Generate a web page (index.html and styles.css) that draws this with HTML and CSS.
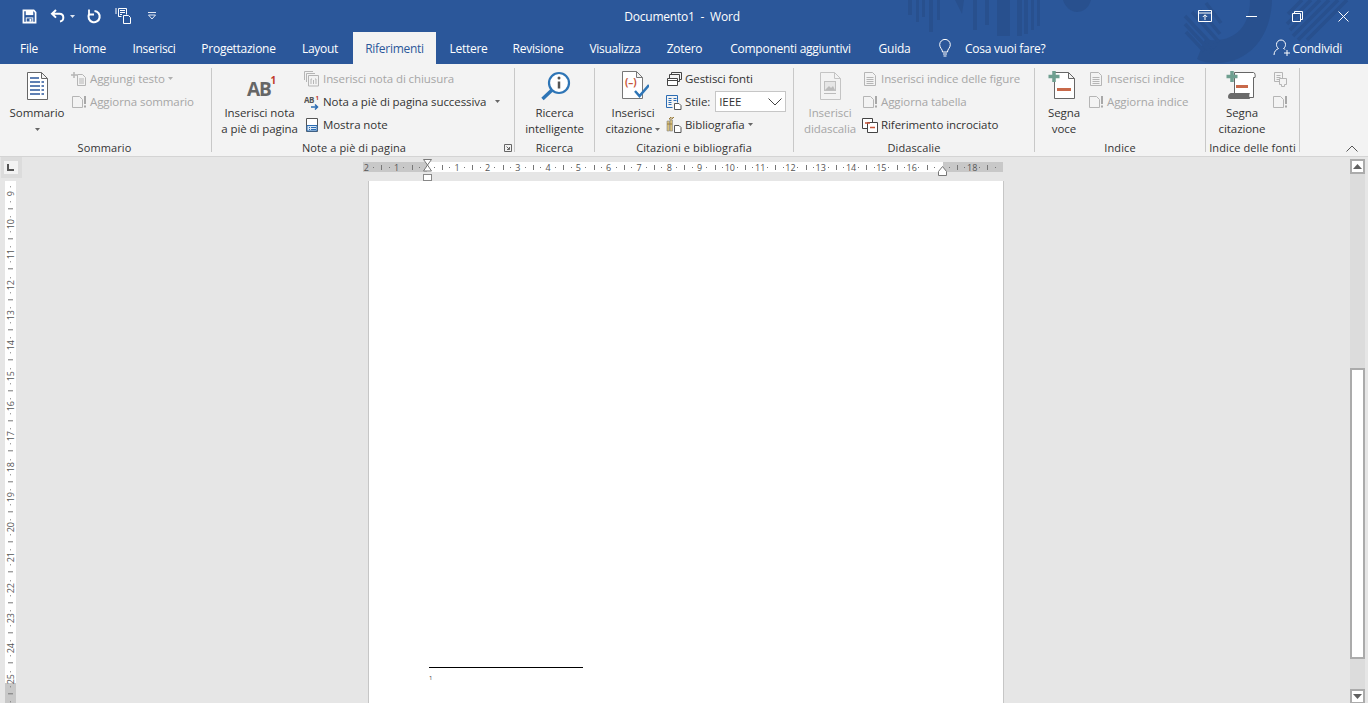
FILE: index.html
```html
<!DOCTYPE html>
<html lang="it">
<head>
<meta charset="utf-8">
<title>Documento1 - Word</title>
<link rel="stylesheet" href="styles.css">
</head>
<body>
<div class="app">
  <header class="header">
    <svg class="watermark" width="1368" height="64" viewBox="0 0 1368 64">
      <g fill="#28508e">
        <rect x="908" y="0" width="4" height="15"/><rect x="916" y="0" width="3" height="22"/><rect x="922" y="0" width="3" height="17"/>
        <rect x="929" y="0" width="4" height="32"/><rect x="937" y="0" width="3" height="20"/>
        <path d="M955 0h9l-2 14z"/><rect x="973" y="0" width="4" height="30"/><rect x="985" y="0" width="4" height="25"/>
        <rect x="997" y="0" width="13" height="36"/><rect x="1017" y="0" width="5" height="36"/><rect x="1024" y="0" width="4" height="34"/><rect x="1031" y="0" width="3" height="30"/><rect x="1037" y="0" width="3" height="26"/>
        <path d="M1063 0h28c-2 8-8 12-14 12s-12-5-14-12z"/>
        <path d="M1250 0h22c-1 38-24 63-55 63-8 0-15-1-20-4l8-20c14 4 45 0 45-39z"/>
      </g>
      <g stroke="#28508e" stroke-width="3.5" fill="none">
        <path d="M1185 16l30 32M1185 24l26 28M1186 32l18 19M1192 12l27 30M1200 10l20 24M1206 3l15 20"/>
        <path d="M1347 0l-40 40M1338 0l-40 40M1329 0l-36 36M1320 0l-30 30M1311 0l-24 24M1302 0l-14 14"/>
      </g>
    </svg>
    <div class="title-bar">
      <div class="qat">
        <span class="qat-btn qat-save"><svg width="15" height="15" viewBox="0 0 16 16"><path d="M1.500 1.500h11l2 2v11h-13z" fill="none" stroke="#fff" stroke-width="1.800"/><rect x="4" y="2" width="8" height="4.500" fill="#fff"/><rect x="4.500" y="9.500" width="7" height="4.500" fill="none" stroke="#fff"/><rect x="8" y="10.500" width="2" height="3" fill="#fff"/></svg></span>
        <span class="qat-btn qat-undo"><svg width="16" height="16" viewBox="0 0 16 16"><path d="M6 2L2 5.800l4 3.800M2.500 5.800h7c5 0 5 7 .5 7.800" fill="none" stroke="#fff" stroke-width="2"/></svg><svg class="mini" width="5" height="3" viewBox="0 0 5 3"><path d="M0 0h5L2.500 3z" fill="#dfe6f2"/></svg></span>
        <span class="qat-btn qat-redo"><svg width="16" height="16" viewBox="0 0 16 16"><path d="M8.500 3a5.600 5.600 0 1 1-5.500 3.200" fill="none" stroke="#fff" stroke-width="2.100"/><path d="M3 1.500v5h5" fill="none" stroke="#fff" stroke-width="1.800"/></svg></span>
        <span class="qat-btn qat-touch"><svg width="18" height="18" viewBox="0 0 18 18"><g fill="none" stroke="#fff"><path d="M4.500 1.500h8v6M4.500 1.500v8h3"/><path d="M9.500 8.500h5l2 2v6h-7z"/></g><path d="M6 3.500h5M6 5.500h5M6 7.500h2M1 2h2M1 4h2M1 6h2" stroke="#fff"/></svg></span>
        <span class="qat-btn qat-custom"><svg width="10" height="8" viewBox="0 0 10 8"><path d="M1 .5h8M1.500 3h7L5 7z" stroke="#e3e9f4" fill="none"/></svg></span>
      </div>
      <div class="doc-title">Documento1&nbsp; -&nbsp; Word</div>
      <div class="win-controls">
        <span class="win-btn"><svg width="14" height="12" viewBox="0 0 14 12"><path d="M.5.500h13v11H.500zM.5 3h13M7 10V5M4.800 7L7 4.800 9.200 7" fill="none" stroke="#fff"/></svg></span>
        <span class="win-btn"><svg width="11" height="11" viewBox="0 0 11 11"><path d="M0 5.500h11" stroke="#fff"/></svg></span>
        <span class="win-btn"><svg width="11" height="11" viewBox="0 0 11 11"><path d="M.5 2.500h8v8h-8zM2.500 2.500v-2h8v8h-2" fill="none" stroke="#fff"/></svg></span>
        <span class="win-btn"><svg width="11" height="11" viewBox="0 0 11 11"><path d="M.5.500l10 10M10.500.500l-10 10" fill="none" stroke="#fff"/></svg></span>
      </div>
    </div>
    <nav class="tabs">
      <span class="tab">File</span>
      <span class="tab">Home</span>
      <span class="tab">Inserisci</span>
      <span class="tab">Progettazione</span>
      <span class="tab">Layout</span>
      <span class="tab active">Riferimenti</span>
      <span class="tab">Lettere</span>
      <span class="tab">Revisione</span>
      <span class="tab">Visualizza</span>
      <span class="tab">Zotero</span>
      <span class="tab">Componenti aggiuntivi</span>
      <span class="tab">Guida</span>
      <span class="tell-me"><svg width="16" height="18" viewBox="0 0 16 18"><path d="M5.500 13c0-3-2.800-4-2.800-7.300a5.300 5.300 0 0 1 10.600 0C13.300 9 10.500 10 10.500 13zM6 15h4M6.500 17h3" fill="none" stroke="#fff"/></svg><span>Cosa vuoi fare?</span></span>
      <span class="share"><svg width="18" height="18" viewBox="0 0 18 18"><path d="M1 16c0-4 2.500-5.500 4.500-6.500C4 8.500 3.500 7 3.500 5.500a4.500 4.500 0 0 1 9 0c0 1.500-.5 3-2 4 .7.300 1.200.6 1.700 1" fill="none" stroke="#fff"/><path d="M14 11v6M11 14h6" stroke="#fff"/></svg><span>Condividi</span></span>
    </nav>
  </header>

  <section class="ribbon">
    <div class="group g-toc">
      <div class="group-body">
        <div class="big big-toc">
          <svg class="big-icon" width="32" height="32" viewBox="0 0 32 32"><path d="M6.500 2.500h14l6 6v21h-20zM20.500 2.500v6h6" fill="#fff" stroke="#666"/><path d="M9 8h9M9 12h14M9 16h14M9 20h14M9 24h14" stroke="#2b579a" stroke-width="1.500" stroke-dasharray="10 1.500"/></svg>
          <span class="big-text">Sommario</span>
          <svg class="caret big-caret" width="5" height="3" viewBox="0 0 5 3"><path d="M0 0h5L2.500 3z"/></svg>
        </div>
        <div class="col">
          <div class="row off"><svg width="16" height="16" viewBox="0 0 16 16"><path d="M6.500 3.500h5l3 3v8h-8zM8 8h5M8 10h5M8 12h5" fill="none" stroke="#b5b5b5"/><path d="M3 1v6M0 4h6" stroke="#b5b5b5" stroke-width="1.500"/></svg><span>Aggiungi testo</span><svg class="caret" width="5" height="3" viewBox="0 0 5 3"><path d="M0 0h5L2.500 3z"/></svg></div>
          <div class="row off"><svg width="16" height="16" viewBox="0 0 16 16"><path d="M1.500 2.500h7l3 3v8h-10z" fill="none" stroke="#b5b5b5"/><path d="M14 2v8M14 11.500v2" stroke="#a8a8a8" stroke-width="2"/></svg><span>Aggiorna sommario</span></div>
        </div>
      </div>
      <div class="group-label">Sommario</div>
    </div>

    <div class="group g-notes">
      <div class="group-body">
        <div class="big big-note">
          <svg class="big-icon" width="32" height="32" viewBox="0 0 32 32"><text x="3" y="26" class="ab">AB</text><text x="26.500" y="14" class="ab-one">1</text></svg>
          <span class="big-text">Inserisci nota<br>a piè di pagina</span>
        </div>
        <div class="col col-note">
          <div class="row off"><svg width="16" height="16" viewBox="0 0 16 16"><g fill="none" stroke="#b5b5b5"><path d="M.5 9V.5H9M2.500 11V2.500H11M4.500 13V4.500h10V15H4.500z"/><path d="M7 8v5M7 8h1M12 8v5M12 8h-1"/></g><path d="M9.500 9v4" stroke="#b5b5b5"/></svg><span>Inserisci nota di chiusura</span></div>
          <div class="row"><svg width="16" height="16" viewBox="0 0 16 16"><text x="0" y="9" class="ab-small">AB</text><text x="11.500" y="5.500" class="ab-small-one">1</text><path d="M7 13h6M11 10.500l2.500 2.500-2.500 2.500" fill="none" stroke="#2b6cb3" stroke-width="1.500"/></svg><span>Nota a piè di pagina successiva</span><svg class="caret caret-far" width="5" height="3" viewBox="0 0 5 3"><path d="M0 0h5L2.500 3z"/></svg></div>
          <div class="row"><svg width="16" height="16" viewBox="0 0 16 16"><path d="M2.500 1.500h11v13h-11z" fill="#fff" stroke="#555"/><path d="M3 8.500h10v5.500H3z" fill="#d8e6f4" stroke="#2b6cb3"/><path d="M5 10.500h1M7 10.500h5M5 12.500h1M7 12.500h5" stroke="#2b6cb3"/></svg><span>Mostra note</span></div>
        </div>
      </div>
      <div class="group-label">Note a piè di pagina</div>
      <svg class="launcher" width="8" height="8" viewBox="0 0 8 8"><path d="M.5 7.500V.5h7v7zM2.500 2.500l3 3M3 5.500h2.500V3" fill="none" stroke="#666"/></svg>
    </div>

    <div class="group g-search">
      <div class="group-body">
        <div class="big big-search">
          <svg class="big-icon" width="32" height="32" viewBox="0 0 32 32"><circle cx="20" cy="13" r="10" fill="#fff" stroke="#2e75b6" stroke-width="2.200"/><path d="M13 20L3.500 29" stroke="#2e75b6" stroke-width="3.500"/><path d="M20 11.500v7" stroke="#555" stroke-width="2.500"/><circle cx="20" cy="8" r="1.500" fill="#555"/></svg>
          <span class="big-text">Ricerca<br>intelligente</span>
        </div>
      </div>
      <div class="group-label">Ricerca</div>
    </div>

    <div class="group g-cite">
      <div class="group-body">
        <div class="big big-cite">
          <svg class="big-icon" width="32" height="32" viewBox="0 0 32 32"><path d="M5.500 1.500h14l6 6v21h-20zM19.500 1.500v6h6" fill="#fff" stroke="#777"/><text x="8" y="16" class="paren">(–)</text><path d="M18 21l4.500 5L32 15" fill="none" stroke="#2e75b6" stroke-width="2.500"/></svg>
          <span class="big-text">Inserisci<br>citazione<svg class="caret inline-caret" width="5" height="3" viewBox="0 0 5 3"><path d="M0 0h5L2.500 3z"/></svg></span>
        </div>
        <div class="col col-cite">
          <div class="row"><svg width="16" height="16" viewBox="0 0 16 16"><path d="M5.500 5V1.500h10v7h-2" fill="none" stroke="#444"/><path d="M3.500 7V3.500h10v7h-2" fill="#f3f3f3" stroke="#444"/><path d="M1.500 7.500h10v7h-10z" fill="#fff" stroke="#444"/><path d="M1.500 9.500h10" stroke="#444"/></svg><span>Gestisci fonti</span></div>
          <div class="row"><svg width="16" height="16" viewBox="0 0 16 16"><path d="M.5 1.500h11v7M.5 1.500v12h6" fill="none" stroke="#2b6cb3"/><path d="M2.500 4.500h3M2.500 6.500h3M2.500 8.500h3M2.500 10.500h3M7.500 4.500h3M7.500 6.500h3" stroke="#2b6cb3"/><path d="M8.500 9.500h4.500l2 2v4h-6.500z" fill="#fff" stroke="#555"/></svg><span>Stile:</span>
            <span class="combo"><span>IEEE</span><svg width="14" height="8" viewBox="0 0 14 8"><path d="M.5.500L7 7l6.500-6.500" fill="none" stroke="#444"/></svg></span></div>
          <div class="row"><svg width="16" height="16" viewBox="0 0 16 16"><path d="M1 4h2.500v10H1zM4 3h2.500v11H4z" fill="#d9c17a" stroke="#888" stroke-width=".6"/><path d="M3 2l2-2h3L6 2zM1 7h5" stroke="#9a7d3c" fill="none"/><path d="M8.500 8.500h4.500l2 2v5H8.500z" fill="#fff" stroke="#555"/></svg><span>Bibliografia</span><svg class="caret" width="5" height="3" viewBox="0 0 5 3"><path d="M0 0h5L2.500 3z"/></svg></div>
        </div>
      </div>
      <div class="group-label">Citazioni e bibliografia</div>
    </div>

    <div class="group g-cap">
      <div class="group-body">
        <div class="big big-cap off">
          <svg class="big-icon" width="32" height="32" viewBox="0 0 32 32"><path d="M6.500 2.500h14l6 6v21h-20zM20.500 2.500v6h6" fill="none" stroke="#c4c4c4"/><rect x="10.500" y="11.500" width="11" height="9" fill="#e6e6e6" stroke="#c0c0c0"/><path d="M11 20l4-4 2 2 2-2 2 4z" fill="#bbb"/><path d="M10 23.500h12" stroke="#bbb"/></svg>
          <span class="big-text">Inserisci<br>didascalia</span>
        </div>
        <div class="col col-cap">
          <div class="row off"><svg width="16" height="16" viewBox="0 0 16 16"><path d="M2.500 1.500h8l3 3v10h-11zM4.500 6.500h7M4.500 8.500h7M4.500 10.500h7M4.500 12.500h7" fill="none" stroke="#b5b5b5"/></svg><span>Inserisci indice delle figure</span></div>
          <div class="row off"><svg width="16" height="16" viewBox="0 0 16 16"><path d="M1.500 2.500h7l3 3v8h-10z" fill="none" stroke="#b5b5b5"/><path d="M14 2v8M14 11.500v2" stroke="#a8a8a8" stroke-width="2"/></svg><span>Aggiorna tabella</span></div>
          <div class="row"><svg width="16" height="16" viewBox="0 0 16 16"><path d="M.5 1.500h10v10h-10z" fill="#fff" stroke="#444"/><path d="M5.500 5.500h10v10h-10z" fill="#fff" stroke="#444"/><path d="M3 6h5" stroke="#c8553a" stroke-width="1.500"/><path d="M8 10.500h5" stroke="#c8553a" stroke-width="1.500"/></svg><span>Riferimento incrociato</span></div>
        </div>
      </div>
      <div class="group-label">Didascalie</div>
    </div>

    <div class="group g-index">
      <div class="group-body">
        <div class="big big-index">
          <svg class="big-icon" width="32" height="32" viewBox="0 0 32 32"><path d="M6.500 2.500h14l6 6v20h-20zM20.500 2.500v6h6" fill="#fff" stroke="#666"/><path d="M9 19.500h14" stroke="#c8694a" stroke-width="3"/><path d="M6 1v11M0.500 6.500h11" stroke="#6f9f90" stroke-width="3.500"/></svg>
          <span class="big-text">Segna<br>voce</span>
        </div>
        <div class="col col-index">
          <div class="row off"><svg width="16" height="16" viewBox="0 0 16 16"><path d="M2.500 1.500h8l3 3v10h-11zM4.500 6.500h7M4.500 8.500h7M4.500 10.500h7M4.500 12.500h7" fill="none" stroke="#b5b5b5"/></svg><span>Inserisci indice</span></div>
          <div class="row off"><svg width="16" height="16" viewBox="0 0 16 16"><path d="M1.500 2.500h7l3 3v8h-10z" fill="none" stroke="#b5b5b5"/><path d="M14 2v8M14 11.500v2" stroke="#a8a8a8" stroke-width="2"/></svg><span>Aggiorna indice</span></div>
        </div>
      </div>
      <div class="group-label">Indice</div>
    </div>

    <div class="group g-auth">
      <div class="group-body">
        <div class="big big-auth">
          <svg class="big-icon" width="32" height="32" viewBox="0 0 32 32"><path d="M8.500 2.500h19c1.500 0 2 3 1.500 5h-1.500v20h-19z" fill="#fff" stroke="#666"/><path d="M2 27c0-3 2-4 3-4h19c-1 1-1 4 0 6H4c-1 0-2-1-2-2z" fill="#6a6a6a"/><path d="M10 16.500h12" stroke="#c8694a" stroke-width="3"/><path d="M6 1v11M0.500 6.500h11" stroke="#6f9f90" stroke-width="3.500"/></svg>
          <span class="big-text">Segna<br>citazione</span>
        </div>
        <div class="col col-auth">
          <div class="row off"><svg width="16" height="16" viewBox="0 0 16 16"><path d="M2.500 1.500h8v9h-8zM4.500 4.500h4M4.500 6.500h4M4.500 8.500h4" fill="none" stroke="#b5b5b5"/><path d="M7.500 7.500h7v6h-2v2h-3v-2h-2z" fill="#f3f3f3" stroke="#b5b5b5"/></svg></div>
          <div class="row off"><svg width="16" height="16" viewBox="0 0 16 16"><path d="M1.500 2.500h7l3 3v8h-10z" fill="none" stroke="#b5b5b5"/><path d="M14 2v8M14 11.500v2" stroke="#a8a8a8" stroke-width="2"/></svg></div>
        </div>
      </div>
      <div class="group-label">Indice delle fonti</div>
    </div>

    <svg class="collapse" width="12" height="7" viewBox="0 0 12 7"><path d="M.5 6.500L6 1l5.500 5.500" fill="none" stroke="#555"/></svg>
  </section>

  <main class="workspace">
    <aside class="left-rail">
      <div class="corner"><span class="corner-inner"><svg width="8" height="7" viewBox="0 0 8 7"><path d="M1 0v6h6" fill="none" stroke="#555" stroke-width="2"/></svg></span></div>
      <div class="v-ruler">
        <div class="v-track">
          <span>9</span><span>10</span><span>11</span><span>12</span><span>13</span><span>14</span><span>15</span><span>16</span><span>17</span><span>18</span><span>19</span><span>20</span><span>21</span><span>22</span><span>23</span><span>24</span><span>25</span><span></span>
        </div>
      </div>
    </aside>
    <div class="canvas">
      <div class="h-ruler">
        <div class="h-clip">
          <div class="h-track">
            <span>2</span><span>1</span><span></span><span>1</span><span>2</span><span>3</span><span>4</span><span>5</span><span>6</span><span>7</span><span>8</span><span>9</span><span>10</span><span>11</span><span>12</span><span>13</span><span>14</span><span>15</span><span>16</span><span></span><span>18</span><span></span>
          </div>
        </div>
        <svg class="indent-left" width="10" height="22" viewBox="0 0 10 22"><path d="M.5.500h8L4.500 6zM4.500 6l4 6h-8z" fill="#fff" stroke="#777"/><rect x=".5" y="15.500" width="8" height="6" fill="#fff" stroke="#888"/></svg>
        <svg class="indent-right" width="10" height="10" viewBox="0 0 10 10"><path d="M4.500 .5l4 5v4h-8v-4z" fill="#fff" stroke="#777"/></svg>
      </div>
      <article class="page">
        <div class="footnote-rule"></div>
        <div class="footnote-num">1</div>
      </article>
    </div>
    <div class="scrollbar">
      <div class="sb-btn"><svg width="9" height="5" viewBox="0 0 9 5"><path d="M4.500 0L9 5H0z" fill="#606060"/></svg></div>
      <div class="sb-gap sb-gap-top"></div>
      <div class="sb-thumb"></div>
      <div class="sb-gap sb-gap-bottom"></div>
      <div class="sb-btn"><svg width="9" height="5" viewBox="0 0 9 5"><path d="M0 0h9L4.500 5z" fill="#606060"/></svg></div>
    </div>
  </main>
</div>
</body>
</html>
```
FILE: styles.css
```css
* { box-sizing: border-box; }
html, body { margin: 0; padding: 0; height: 100%; overflow: hidden; }
body { font-family: "Open Sans", "Noto Sans", sans-serif; font-size: 11.5px; letter-spacing: -0.08px; color: #333; background: #e6e6e6; }
svg { display: block; flex: none; }
.app { display: flex; flex-direction: column; height: 703px; width: 1368px; overflow: hidden; }

/* Header */
.header { position: relative; background: #2b579a; color: #fff; height: 64px; flex: none; }
.watermark { position: absolute; left: 0; top: 0; }
.title-bar { position: relative; display: grid; grid-template-columns: 1fr auto 1fr; height: 32px; align-items: center; }
.qat { display: flex; align-items: center; padding-left: 14px; }
.qat-btn { display: flex; align-items: center; justify-content: center; gap: 4px; height: 32px; }
.qat-save { width: 30px; }
.qat-undo { width: 37px; }
.qat-redo { width: 26px; }
.qat-touch { width: 31px; }
.qat-custom { width: 27px; }
.doc-title { font-size: 12px; letter-spacing: -0.2px; padding-right: 4px; white-space: nowrap; }
.win-controls { display: flex; justify-content: flex-end; padding-right: 2px; }
.win-btn { width: 46px; height: 32px; display: flex; align-items: center; justify-content: center; }

.tabs { position: relative; display: flex; height: 32px; align-items: stretch; font-size: 12px; letter-spacing: -0.27px; }
.tab { display: flex; align-items: center; justify-content: center; white-space: nowrap; }
.tab:nth-child(1) { width: 58px; }
.tab:nth-child(2) { width: 63px; }
.tab:nth-child(3) { width: 66px; }
.tab:nth-child(4) { width: 103px; }
.tab:nth-child(5) { width: 63px; padding-right: 3px; }
.tab:nth-child(6) { width: 83px; }
.tab:nth-child(7) { width: 65px; }
.tab:nth-child(8) { width: 74px; }
.tab:nth-child(9) { width: 80px; }
.tab:nth-child(10) { width: 59px; }
.tab:nth-child(11) { width: 153px; }
.tab:nth-child(12) { width: 55px; }
.tab.active { background: #f3f3f3; color: #2b579a; }
.tell-me { display: flex; align-items: center; gap: 12px; margin-left: 15px; white-space: nowrap; }
.share { display: flex; align-items: center; gap: 2px; margin-left: auto; padding-right: 26px; white-space: nowrap; }

/* Ribbon */
.ribbon { display: flex; flex: none; height: 93px; padding-top: 4px; background: #f3f3f3; border-bottom: 1px solid #d4d4d4; }
.group { position: relative; display: flex; flex-direction: column; height: 84px; border-right: 1px solid #c8c8c8; }
.g-toc { width: 212px; padding-left: 3px; }
.g-notes { width: 303px; padding-left: 8px; }
.g-search { width: 80px; }
.g-cite { width: 199px; padding-left: 9px; }
.g-cap { width: 241px; padding-left: 8px; }
.g-index { width: 171px; padding-left: 9px; }
.g-auth { width: 94px; padding-left: 2px; }
.group-body { display: flex; height: 73px; margin-top: -1px; flex: none; }
.group-label { height: 16px; line-height: 16px; text-align: center; font-size: 11px; letter-spacing: 0.1px; white-space: nowrap; flex: none; }
.g-notes .group-label { padding-right: 26px; }
.g-toc .group-label { padding-right: 5px; }
.g-cite .group-label { padding-right: 9px; }
.g-cap .group-label { padding-right: 8px; }
.g-index .group-label { padding-right: 9px; }
.g-auth .group-label { padding-right: 2px; }

.big { display: flex; flex-direction: column; align-items: center; text-align: center; line-height: 16px; white-space: nowrap; flex: none; }
.big-icon { margin-top: 3px; margin-bottom: 3px; }
.big-text { display: block; }
.big-toc { width: 68px; }
.big-note { width: 79px; }
.big-search { width: 79px; }
.big-cite { width: 58px; }
.big-cap { width: 52px; margin-left: 2px; }
.big-index { width: 40px; }
.big-auth { width: 68px; }
.big-caret { margin-top: 7px; }
.inline-caret { display: inline-block; margin-left: 3px; vertical-align: middle; }
.caret path { fill: #666; }
.off .caret path { fill: #b0b0b0; }

.col { display: flex; flex-direction: column; }
.col-note { margin-left: 5px; }
.col-cite { margin-left: 4px; }
.col-cap { margin-left: 6px; }
.col-index { margin-left: 4px; }
.col-auth { margin-left: -4px; }
.row { display: flex; align-items: center; height: 23px; gap: 3px; white-space: nowrap; }
.off { color: #a6a6a6; }
.caret-far { margin-left: 6px; }
.combo { display: flex; align-items: center; justify-content: space-between; width: 71px; height: 21px; margin-left: 2px; padding: 0 3px; background: #fff; border: 1px solid #c6c6c6; }

.ab { font: 700 19px "Open Sans", sans-serif; fill: #666; letter-spacing: -1px; }
.ab-one { font: 700 10px "Open Sans", sans-serif; fill: #c0392b; }
.ab-small { font: 700 8px "Open Sans", sans-serif; fill: #555; letter-spacing: -0.4px; }
.ab-small-one { font: 700 6px "Open Sans", sans-serif; fill: #c0392b; }
.paren { font: 700 10px "Open Sans", sans-serif; fill: #c8553a; }

.launcher { position: absolute; right: 2px; top: 76px; }
.collapse { align-self: flex-end; margin: 0 0 4px 46px; }

/* Workspace */
.workspace { flex: 1; display: flex; min-height: 0; background: #e6e6e6; }
.left-rail { width: 22px; flex: none; }
.corner { width: 21px; height: 21px; margin-left: 1px; background: #dcdcdc; padding: 4px 3px; }
.corner-inner { display: flex; align-items: center; justify-content: center; width: 14px; height: 13px; background: #f3f3f3; }
.v-ruler { width: 11px; height: 522px; margin: 3px 0 0 5px; overflow: hidden; background: linear-gradient(#fff 502px, #c8c8c8 502px); }
.v-track { display: flex; flex-direction: column; margin-top: -2.15px; }
.v-track span { display: flex; align-items: center; justify-content: center; flex: none; width: 11px; height: 30.3px; font-size: 9px; letter-spacing: 0; line-height: 1; color: #555; writing-mode: vertical-rl; transform: rotate(180deg); background:
  linear-gradient(#777, #777) 50% 0 / 5px 1px no-repeat,
  linear-gradient(#777, #777) 50% 25% / 1px 1px no-repeat,
  linear-gradient(#777, #777) 50% 75% / 1px 1px no-repeat; }

.canvas { flex: 1; min-width: 0; }
.h-ruler { position: relative; width: 640px; height: 10px; margin: 5px 0 0 341px; background: linear-gradient(90deg, #c8c8c8 64px, #fff 64px, #fff 580px, #c8c8c8 580px); }
.h-clip { width: 640px; height: 10px; overflow: hidden; }
.h-track { display: flex; margin-left: -11.85px; height: 10px; }
.h-track span { display: flex; align-items: center; justify-content: center; flex: none; width: 30.3px; height: 10px; font-size: 9px; letter-spacing: 0; line-height: 1; color: #555; background:
  linear-gradient(#777, #777) 0 50% / 1px 5px no-repeat,
  linear-gradient(#777, #777) 25% 50% / 1px 1px no-repeat,
  linear-gradient(#777, #777) 75% 50% / 1px 1px no-repeat; }
.indent-left { position: absolute; left: 60px; top: -3px; }
.indent-right { position: absolute; left: 575px; top: 4px; }

.page { width: 636px; height: 522px; margin: 9px 0 0 346px; padding: 486px 0 0 60px; background: #fff; border: 1px solid #c6c6c6; border-width: 0 1px; }
.footnote-rule { width: 154px; height: 1px; background: #000; }
.footnote-num { font-size: 6px; line-height: 6px; margin-top: 7px; color: #444; }

.scrollbar { display: flex; flex-direction: column; width: 15px; height: 546px; margin-right: 3px; flex: none; }
.sb-btn { display: flex; align-items: center; justify-content: center; flex: none; height: 15px; background: #fff; border: 2px solid #ababab; }
.sb-btn:first-child { margin-top: 2px; }
.sb-gap { background: #dcdcdc; flex: none; }
.sb-gap-top { height: 194px; }
.sb-gap-bottom { height: 30px; }
.sb-thumb { flex: none; height: 291px; background: #fff; border: 2px solid #ababab; }
```
